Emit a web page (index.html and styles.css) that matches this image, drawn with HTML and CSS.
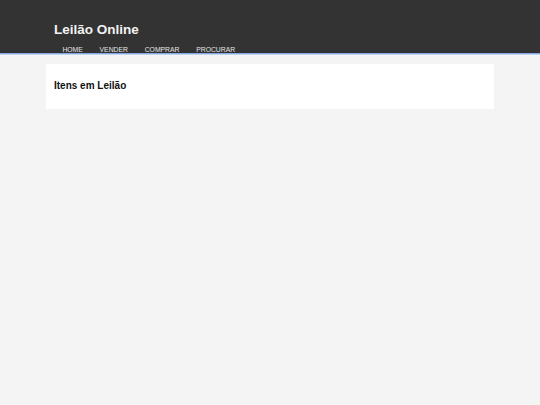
FILE: index.html
```html
<!DOCTYPE html>
<html lang="pt">
<head>
<meta charset="utf-8">
<title>Leilão Online</title>
<link rel="stylesheet" href="styles.css">
</head>
<body>
<header class="site-header">
  <div class="container">
    <h1 class="brand">Leilão Online</h1>
    <nav class="nav">
      <a href="#" class="nav-link">HOME</a>
      <a href="#" class="nav-link">VENDER</a>
      <a href="#" class="nav-link">COMPRAR</a>
      <a href="#" class="nav-link">PROCURAR</a>
    </nav>
  </div>
</header>
<main class="container main">
  <section class="card">
    <h2 class="card-title">Itens em Leilão</h2>
  </section>
</main>
</body>
</html>
```

FILE: styles.css
```css
html, body {
  margin: 0;
  padding: 0;
}
body {
  background: #f4f4f4;
  font-family: "Liberation Sans", Arial, sans-serif;
  color: #111;
}
.container {
  width: 448px;
  margin: 0 auto;
}
.site-header {
  background: #333333;
  height: 53px;
  border-bottom: 1px solid #85a8e4;
  box-shadow: 0 1px 0 #c3d4f1;
  overflow: hidden;
}
.site-header .container {
  padding: 22px 8px 0;
  box-sizing: border-box;
}
.brand {
  margin: 0;
  font-size: 13.5px;
  line-height: 15px;
  font-weight: bold;
  color: #f2f2f2;
}
.nav {
  display: flex;
  margin-top: 9px;
}
.nav-link {
  color: #e4e4e4;
  text-decoration: none;
  font-size: 6.8px;
  line-height: 8px;
  padding: 0 8.4px;
}
.main {
  padding-top: 10px;
}
.card {
  background: #ffffff;
  padding: 16px 8px 17px;
}
.card-title {
  margin: 0;
  font-size: 10px;
  line-height: 12px;
  font-weight: bold;
  color: #111;
}
```
